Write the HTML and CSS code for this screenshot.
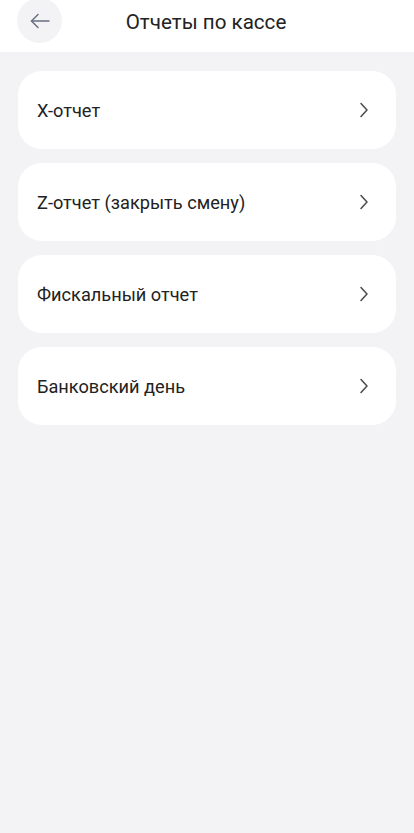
FILE: index.html
```html
<!DOCTYPE html>
<html lang="ru">
<head>
    <meta charset="UTF-8">
    <meta name="viewport" content="width=device-width, initial-scale=1.0">
    <title>Отчеты по кассе</title>
    <link rel="stylesheet" href="styles.css">
</head>
<body>
    <div class="header">
        <a href="javascript:;" class="back-btn">
            <svg width="24" height="24" viewBox="0 0 24 24" fill="none" stroke="#6b7080" stroke-width="1.5" stroke-linecap="round" stroke-linejoin="round">
                <path d="M21 12H3.5"/>
                <path d="M10 5.5L3.5 12l6.5 6.5"/>
            </svg>
        </a>
        <div class="header-title">Отчеты по кассе</div>
    </div>
    <div class="report-list">
        <a href="javascript:;" class="report-item">
            <span>X-отчет</span>
            <svg class="chevron" width="10" height="16" viewBox="0 0 10 16" fill="none" stroke="#4a4a4a" stroke-width="1.5" stroke-linecap="round" stroke-linejoin="round"><path d="M2 1.5l6 6.5-6 6.5"/></svg>
        </a>
        <a href="javascript:;" class="report-item">
            <span>Z-отчет (закрыть смену)</span>
            <svg class="chevron" width="10" height="16" viewBox="0 0 10 16" fill="none" stroke="#4a4a4a" stroke-width="1.5" stroke-linecap="round" stroke-linejoin="round"><path d="M2 1.5l6 6.5-6 6.5"/></svg>
        </a>
        <a href="javascript:;" class="report-item">
            <span>Фискальный отчет</span>
            <svg class="chevron" width="10" height="16" viewBox="0 0 10 16" fill="none" stroke="#4a4a4a" stroke-width="1.5" stroke-linecap="round" stroke-linejoin="round"><path d="M2 1.5l6 6.5-6 6.5"/></svg>
        </a>
        <a href="javascript:;" class="report-item">
            <span>Банковский день</span>
            <svg class="chevron" width="10" height="16" viewBox="0 0 10 16" fill="none" stroke="#4a4a4a" stroke-width="1.5" stroke-linecap="round" stroke-linejoin="round"><path d="M2 1.5l6 6.5-6 6.5"/></svg>
        </a>
    </div>
</body>
</html>
```

FILE: styles.css
```css
* {
    padding: 0;
    margin: 0;
    box-sizing: border-box;
}

body {
    background: #f3f3f6;
    font-family: Roboto, "Noto Sans", sans-serif;
    color: #222222;
    min-height: 833px;
}

a {
    text-decoration: none;
    color: inherit;
}

.header {
    height: 52px;
    background: #ffffff;
    display: flex;
    align-items: flex-start;
    padding-left: 17px;
}

.back-btn {
    width: 45px;
    height: 45px;
    margin-top: -2px;
    border-radius: 50%;
    background: #f3f3f6;
    display: flex;
    align-items: center;
    justify-content: center;
}

.header-title {
    flex: 1;
    text-align: center;
    font-size: 20.6px;
    line-height: 44px;
    padding-right: 64px;
    color: #222222;
}

.report-list {
    padding: 19px 18px;
    display: flex;
    flex-direction: column;
    gap: 14px;
}

.report-item {
    height: 78px;
    background: #ffffff;
    border-radius: 24px;
    display: flex;
    align-items: center;
    justify-content: space-between;
    padding: 0 27px 0 19px;
    font-size: 18.2px;
}

.chevron {
    flex-shrink: 0;
}
```
